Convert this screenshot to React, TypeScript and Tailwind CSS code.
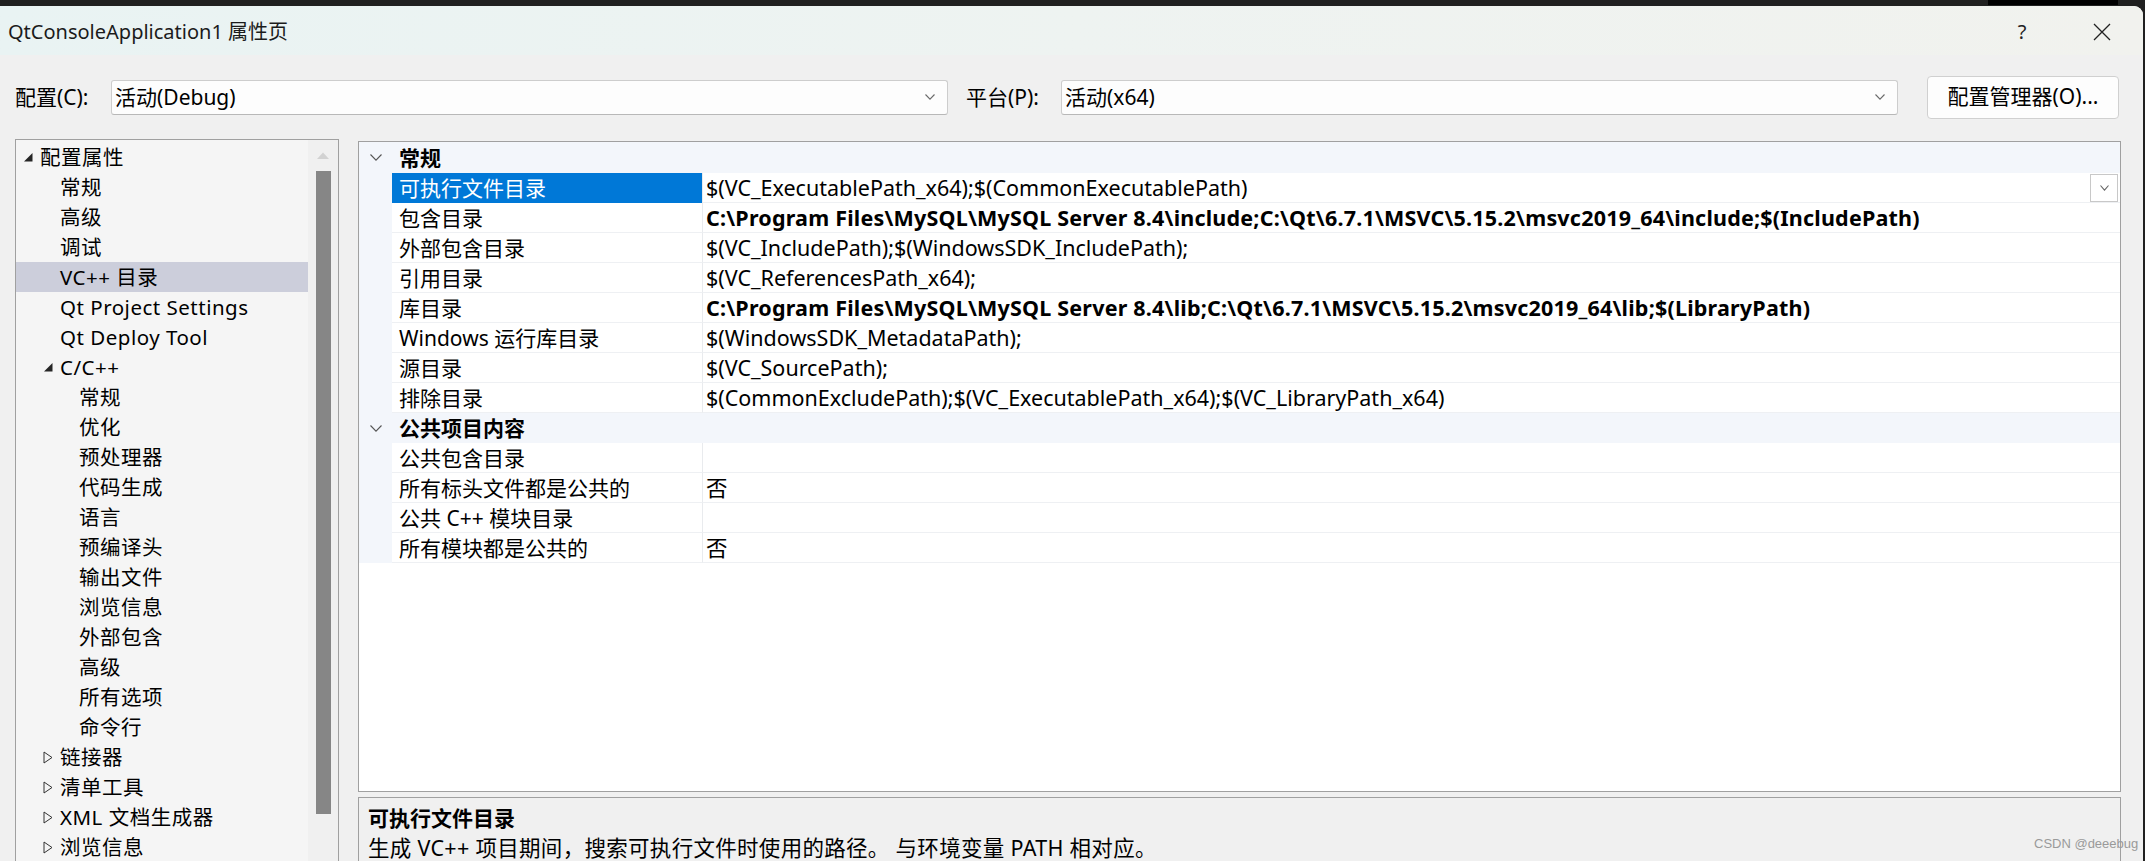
import React from "react";

type TreeItem = { text: string; level: 0 | 1 | 2; arrow?: "open" | "closed"; selected?: boolean };

const tree: TreeItem[] = [
  { text: "配置属性", level: 0, arrow: "open" },
  { text: "常规", level: 1 },
  { text: "高级", level: 1 },
  { text: "调试", level: 1 },
  { text: "VC++ 目录", level: 1, selected: true },
  { text: "Qt Project Settings", level: 1 },
  { text: "Qt Deploy Tool", level: 1 },
  { text: "C/C++", level: 1, arrow: "open" },
  { text: "常规", level: 2 },
  { text: "优化", level: 2 },
  { text: "预处理器", level: 2 },
  { text: "代码生成", level: 2 },
  { text: "语言", level: 2 },
  { text: "预编译头", level: 2 },
  { text: "输出文件", level: 2 },
  { text: "浏览信息", level: 2 },
  { text: "外部包含", level: 2 },
  { text: "高级", level: 2 },
  { text: "所有选项", level: 2 },
  { text: "命令行", level: 2 },
  { text: "链接器", level: 1, arrow: "closed" },
  { text: "清单工具", level: 1, arrow: "closed" },
  { text: "XML 文档生成器", level: 1, arrow: "closed" },
  { text: "浏览信息", level: 1, arrow: "closed" },
];

const spacer = ["w-[7px]", "w-[27px]", "w-[46px]"];

type Row = { name: string; value: string; bold?: boolean; selected?: boolean };

const general: Row[] = [
  { name: "可执行文件目录", value: "$(VC_ExecutablePath_x64);$(CommonExecutablePath)", selected: true },
  {
    name: "包含目录",
    value: "C:\\Program Files\\MySQL\\MySQL Server 8.4\\include;C:\\Qt\\6.7.1\\MSVC\\5.15.2\\msvc2019_64\\include;$(IncludePath)",
    bold: true,
  },
  { name: "外部包含目录", value: "$(VC_IncludePath);$(WindowsSDK_IncludePath);" },
  { name: "引用目录", value: "$(VC_ReferencesPath_x64);" },
  {
    name: "库目录",
    value: "C:\\Program Files\\MySQL\\MySQL Server 8.4\\lib;C:\\Qt\\6.7.1\\MSVC\\5.15.2\\msvc2019_64\\lib;$(LibraryPath)",
    bold: true,
  },
  { name: "Windows 运行库目录", value: "$(WindowsSDK_MetadataPath);" },
  { name: "源目录", value: "$(VC_SourcePath);" },
  { name: "排除目录", value: "$(CommonExcludePath);$(VC_ExecutablePath_x64);$(VC_LibraryPath_x64)" },
];

const pub: Row[] = [
  { name: "公共包含目录", value: "" },
  { name: "所有标头文件都是公共的", value: "否" },
  { name: "公共 C++ 模块目录", value: "" },
  { name: "所有模块都是公共的", value: "否" },
];

function Chevron({ w = 12, h = 7, color = "#5a5a5a" }: { w?: number; h?: number; color?: string }) {
  return (
    <svg width={w} height={h} viewBox={`0 0 ${w} ${h}`}>
      <polyline points={`0.5,0.5 ${w / 2},${h - 0.8} ${w - 0.5},0.5`} fill="none" stroke={color} strokeWidth="1.1" />
    </svg>
  );
}

function TreeArrow({ kind }: { kind: "open" | "closed" }) {
  if (kind === "open") {
    return (
      <svg width="10" height="10" viewBox="0 0 10 10">
        <polygon points="1,9.5 9.5,9.5 9.5,1" fill="#262626" />
      </svg>
    );
  }
  return (
    <svg width="10" height="13" viewBox="0 0 10 13">
      <polygon points="1,1 9,6.5 1,12" fill="none" stroke="#333" strokeWidth="1" />
    </svg>
  );
}

function Header({ label, tall }: { label: string; tall?: boolean }) {
  return (
    <div className={`flex items-center bg-[#f3f6fb] ${tall ? "h-[31px]" : "h-[30px]"}`}>
      <div className="w-[33px] flex justify-center items-center">
        <Chevron w={12} h={7} color="#555" />
      </div>
      <div className="pl-[7px] font-bold text-[21px] leading-[30px] text-black">{label}</div>
    </div>
  );
}

function GridRow({ row, dropdown }: { row: Row; dropdown?: boolean }) {
  return (
    <div className="flex h-[30px]">
      <div className="w-[33px] bg-[#f3f6fb]" />
      <div
        className={`w-[311px] shrink-0 pl-[7px] text-[21px] leading-[30px] whitespace-nowrap ${
          row.selected ? "bg-[#0078d7] text-white" : "bg-white text-black border-b border-[#eef0f3]"
        } border-r border-r-[#e9ebee]`}
      >
        {row.name}
      </div>
      <div className="flex-1 flex items-center bg-white border-b border-[#eef0f3] pl-[3px] pr-[2px] min-w-0">
        <div
          className={`flex-1 text-[21.5px] leading-[29px] whitespace-nowrap text-black ${
            row.bold ? "font-bold tracking-[0.2px]" : ""
          }`}
        >
          {row.value}
        </div>
        {dropdown && (
          <div className="w-[28px] h-[28px] border border-[#c8c8c8] bg-white flex items-center justify-center">
            <Chevron w={9} h={6} color="#666" />
          </div>
        )}
      </div>
    </div>
  );
}

function Combo({ text, width }: { text: string; width: string }) {
  return (
    <div
      className={`${width} h-[35px] bg-[#fdfdfd] border border-[#cdcdcd] border-b-[#b8b8b8] rounded-[3px] flex items-center pl-[3px] pr-[12px]`}
    >
      <div className="flex-1 text-[21px] text-black leading-[30px]">{text}</div>
      <Chevron w={10} h={6} color="#6a6a6a" />
    </div>
  );
}

export default function App() {
  return (
    <div className="relative w-[2145px] h-[861px] overflow-hidden bg-[#202020] font-['Noto_Sans','Noto_Sans_CJK_SC',sans-serif]">
      <div className="h-[6px] flex">
        <div className="ml-[1988px] w-[130px] h-[5px] bg-black" />
      </div>
      <div className="w-[2143px] h-[855px] bg-[#f0f0f0] rounded-tr-[9px] flex flex-col">
        {/* Title bar */}
        <div className="h-[49px] shrink-0 flex items-center bg-gradient-to-r from-[#e9f3f3] via-[#eef3f1] to-[#f1f2ee] rounded-tr-[9px]">
          <div className="pl-[8px] pt-[3px] text-[20px] text-[#1b1b1b] leading-[30px]">QtConsoleApplication1 属性页</div>
          <div className="ml-auto w-[60px] flex justify-center text-[20px] text-[#222] leading-[30px] pt-[3px]">?</div>
          <div className="ml-[20px] mr-[11px] w-[60px] flex justify-center pt-[3px]">
            <svg width="18" height="18" viewBox="0 0 18 18">
              <path d="M1 1 L17 17 M17 1 L1 17" stroke="#222" strokeWidth="1.3" fill="none" />
            </svg>
          </div>
        </div>

        {/* Config row */}
        <div className="mt-[20px] h-[44px] shrink-0 flex items-center">
          <div className="w-[111px] pl-[15px] text-[21px] text-black leading-[30px]">配置(C):</div>
          <Combo text="活动(Debug)" width="w-[837px]" />
          <div className="ml-[18px] w-[95px] text-[21px] text-black leading-[30px]">平台(P):</div>
          <Combo text="活动(x64)" width="w-[837px]" />
          <div className="ml-[29px] w-[192px] h-[43px] bg-[#fdfdfd] border border-[#d0d0d0] rounded-[4px] flex items-center justify-center text-[21px] text-black">
            配置管理器(O)...
          </div>
        </div>

        {/* Main */}
        <div className="mt-[20px] flex-1 flex pl-[15px] pr-[22px] min-h-0">
          {/* Tree */}
          <div className="w-[324px] shrink-0 h-[740px] border border-[#a0a0a0] bg-[#f5f5f5] flex">
            <div className="w-[292px] pt-[2px] flex flex-col">
              {tree.map((t, i) => (
                <div
                  key={i}
                  className={`h-[30px] shrink-0 flex items-center ${t.selected ? "bg-[#cccedb]" : ""}`}
                >
                  <div className={spacer[t.level]} />
                  <div className="w-[17px] flex items-center">
                    {t.arrow && <TreeArrow kind={t.arrow} />}
                  </div>
                  <div className="text-[20.5px] tracking-[0.5px] text-black leading-[30px] whitespace-nowrap">
                    {t.text}
                  </div>
                </div>
              ))}
            </div>
            <div className="w-[30px] bg-[#f0f0f0] flex flex-col items-center">
              <div className="h-[31px] flex items-center justify-center">
                <svg width="12" height="7" viewBox="0 0 12 7">
                  <polygon points="0,7 6,0.5 12,7" fill="#d2d2d2" />
                </svg>
              </div>
              <div className="w-[15px] h-[643px] bg-[#868686]" />
            </div>
          </div>

          {/* Right side */}
          <div className="ml-[19px] flex-1 flex flex-col min-w-0">
            <div className="mt-[2px] h-[651px] shrink-0 border border-[#a0a0a0] bg-white flex flex-col overflow-hidden">
              <Header label="常规" tall />
              {general.map((r, i) => (
                <GridRow key={i} row={r} dropdown={i === 0} />
              ))}
              <Header label="公共项目内容" />
              {pub.map((r, i) => (
                <GridRow key={i} row={r} />
              ))}
            </div>
            <div className="mt-[5px] flex-1 border border-[#a0a0a0] border-b-0 bg-[#f0f0f0] pl-[9px] pt-[5px]">
              <div className="h-[30px] leading-[30px] text-[21px] font-bold text-black">可执行文件目录</div>
              <div className="h-[30px] leading-[30px] text-[21.5px] tracking-[0.3px] text-black whitespace-nowrap">
                生成 VC++ 项目期间，搜索可执行文件时使用的路径。 与环境变量 PATH 相对应。
              </div>
            </div>
          </div>
        </div>
      </div>

      <div className="absolute left-[2034px] top-[834px] whitespace-nowrap text-[13px] text-[#9a9a9a] font-['Liberation_Sans',sans-serif] leading-[20px]">
        CSDN @deeebug
      </div>
    </div>
  );
}
